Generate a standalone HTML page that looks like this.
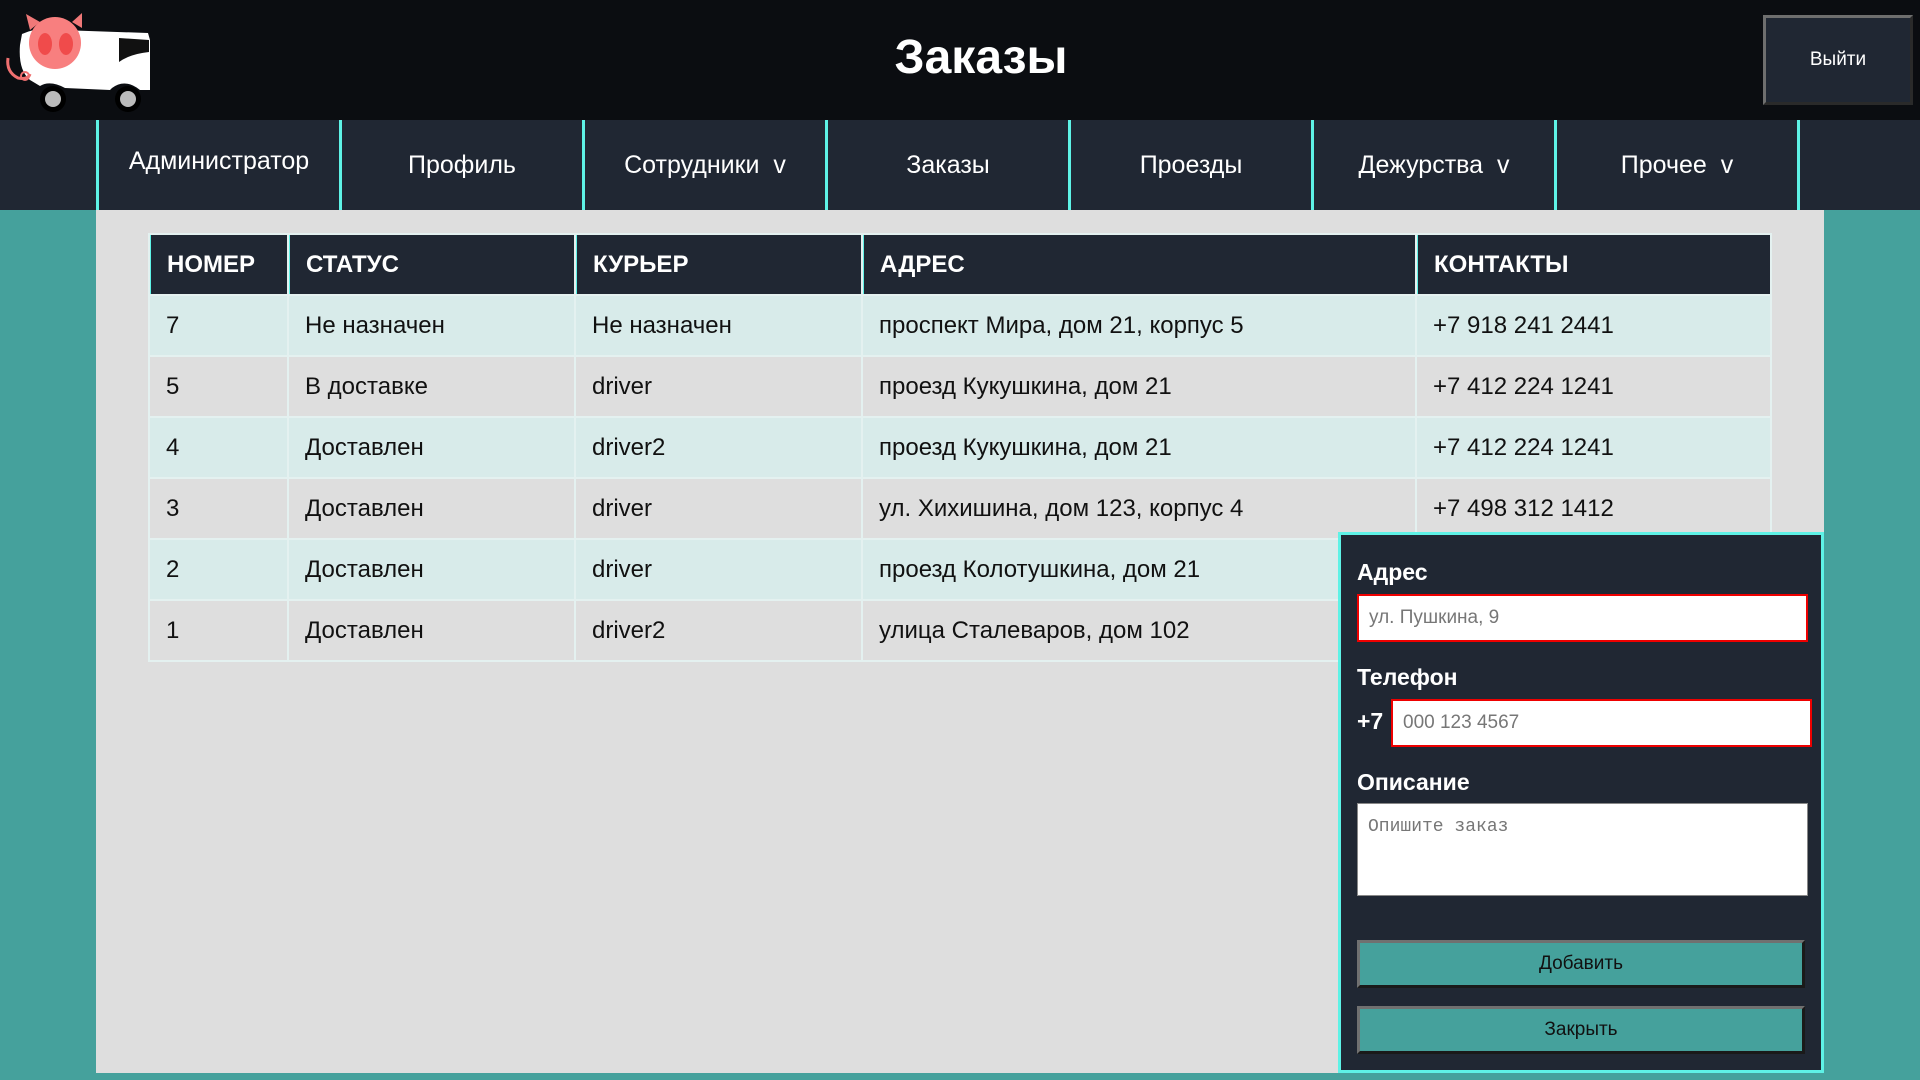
<!DOCTYPE html>
<html><head><meta charset="utf-8"><style>
*{margin:0;padding:0;box-sizing:border-box}
body{width:1920px;height:1080px;background:#45a19c;font-family:"Liberation Sans",Arial,sans-serif;position:relative;overflow:hidden}
.hdr{position:absolute;left:0;top:0;width:1920px;height:120px;background:#0b0d11}
.title{position:absolute;left:0;width:1962px;top:30px;text-align:center;color:#fff;font-weight:bold;font-size:48px}
.exit{position:absolute;left:1763px;top:15px;width:150px;height:90px;background:#202733;border:3px solid;border-color:#6e6e6e #2a2a2a #2a2a2a #6e6e6e;color:#fff;font-size:19px;text-align:center;line-height:84px}
.nav{position:absolute;left:0;top:120px;width:1920px;height:90px;background:#202733}
.nav div{position:absolute;top:0;height:90px;width:243px;border-right:3px solid #5ef2e6;color:#fff;font-size:25px;text-align:center;line-height:90px}
.main{position:absolute;left:96px;top:210px;width:1728px;height:863px;background:#dedede}
table{position:absolute;left:148px;top:233px;border-collapse:separate;border-spacing:2px;background:#e4f1f0}
th{background:#202733;color:#fff;font-size:24px;text-align:left;height:59px;padding-left:16px;border-left:1px solid #5ef2e6}
td{height:59px;font-size:24px;padding-left:16px;color:#111}
tr.a td{background:#d8ebea}
tr.b td{background:#dedede}
.modal{position:absolute;left:1338px;top:532px;width:486px;height:541px;background:#202733;border:3px solid #5ef2e6}
.lbl{position:absolute;left:16px;color:#fff;font-weight:bold;font-size:23px}
.inp{position:absolute;background:#fff;border:2px solid #e00;font-size:19px;color:#777;padding-left:10px}
.btn{position:absolute;left:16px;width:448px;height:48px;background:#45a19c;border:3px solid;border-color:#707070 #1a1a1a #1a1a1a #707070;text-align:center;font-size:19px;color:#111;line-height:42px}
</style></head><body>
<div class="hdr">
<svg width="160" height="115" viewBox="0 0 160 115" style="position:absolute;left:0;top:0">
<path d="M22 34 Q40 26 60 30 L148 33 L150 40 L150 90 L140 90 Q125 78 112 88 L110 90 L65 88 Q50 80 40 86 L30 80 Q18 70 20 45 Z" fill="#fff"/>
<path d="M119 38 L149 40 L149 52 Q130 54 119 62 Z" fill="#111"/>
<path d="M8 58 Q6 72 18 78 Q28 80 30 74" fill="none" stroke="#f07070" stroke-width="3"/>
<circle cx="25" cy="76" r="4" fill="none" stroke="#f07070" stroke-width="2"/>
<path d="M26 14 L40 22 L30 30 Z" fill="#f07878"/>
<path d="M82 13 L72 22 L82 28 Z" fill="#f07878"/>
<circle cx="55" cy="43" r="26" fill="#f87f7f"/>
<ellipse cx="45" cy="44" rx="7" ry="11" fill="#f04b4b"/>
<ellipse cx="66" cy="44" rx="7" ry="11" fill="#f04b4b"/>
<circle cx="53" cy="99" r="13" fill="#000"/><circle cx="53" cy="99" r="8" fill="#bbb"/>
<circle cx="128" cy="99" r="13" fill="#000"/><circle cx="128" cy="99" r="8" fill="#bbb"/>
</svg>
<div class="title">Заказы</div>
<div class="exit">Выйти</div>
</div>
<div class="nav">
<div style="left:96px;border-left:3px solid #5ef2e6;width:246px;line-height:82px">Администратор</div>
<div style="left:342px">Профиль</div>
<div style="left:585px">Сотрудники &nbsp;v</div>
<div style="left:828px">Заказы</div>
<div style="left:1071px">Проезды</div>
<div style="left:1314px">Дежурства &nbsp;v</div>
<div style="left:1557px">Прочее &nbsp;v</div>
</div>
<div class="main"></div>
<table>
<tr><th style="width:137px">НОМЕР</th><th style="width:285px">СТАТУС</th><th style="width:285px">КУРЬЕР</th><th style="width:552px">АДРЕС</th><th style="width:353px">КОНТАКТЫ</th></tr>
<tr class="a"><td>7</td><td>Не назначен</td><td>Не назначен</td><td>проспект Мира, дом 21, корпус 5</td><td>+7 918 241 2441</td></tr>
<tr class="b"><td>5</td><td>В доставке</td><td>driver</td><td>проезд Кукушкина, дом 21</td><td>+7 412 224 1241</td></tr>
<tr class="a"><td>4</td><td>Доставлен</td><td>driver2</td><td>проезд Кукушкина, дом 21</td><td>+7 412 224 1241</td></tr>
<tr class="b"><td>3</td><td>Доставлен</td><td>driver</td><td>ул. Хихишина, дом 123, корпус 4</td><td>+7 498 312 1412</td></tr>
<tr class="a"><td>2</td><td>Доставлен</td><td>driver</td><td>проезд Колотушкина, дом 21</td><td>+7 412 224 1241</td></tr>
<tr class="b"><td>1</td><td>Доставлен</td><td>driver2</td><td>улица Сталеваров, дом 102</td><td>+7 412 224 1241</td></tr>
</table>
<div class="modal">
<div class="lbl" style="top:24px">Адрес</div>
<div class="inp" style="left:16px;top:59px;width:451px;height:48px;line-height:44px">ул. Пушкина, 9</div>
<div class="lbl" style="top:129px">Телефон</div>
<div class="lbl" style="top:173px">+7</div>
<div class="inp" style="left:50px;top:164px;width:421px;height:48px;line-height:44px">000 123 4567</div>
<div class="lbl" style="top:234px">Описание</div>
<div class="inp" style="left:16px;top:268px;width:451px;height:93px;border:1px solid #888;font-family:'Liberation Mono',monospace;font-size:18px;line-height:20px;padding-top:13px">Опишите заказ</div>
<div class="btn" style="top:405px">Добавить</div>
<div class="btn" style="top:471px">Закрыть</div>
</div>
</body></html>
